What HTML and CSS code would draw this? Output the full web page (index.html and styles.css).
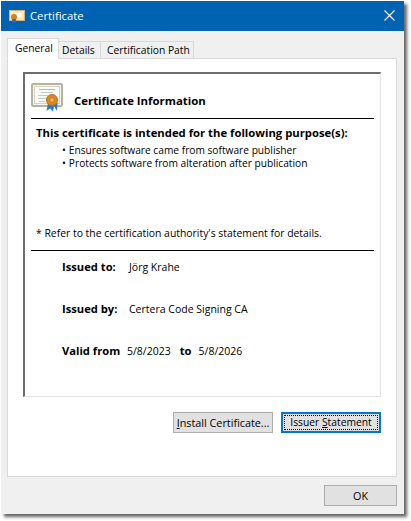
FILE: index.html
```html
<!DOCTYPE html>
<html lang="en">
<head>
    <meta charset="UTF-8">
    <title>Certificate</title>
    <link rel="stylesheet" href="styles.css">
</head>
<body>
    <div class="window">
        <div class="titlebar">
            <svg class="title-icon" width="16" height="16" viewBox="0 0 16 16">
                <rect x="0.5" y="2.5" width="15" height="10" fill="#fbe9c4" stroke="#dcb070"/>
                <rect x="6" y="5" width="7" height="4" fill="#fff"/>
                <circle cx="5" cy="9" r="3" fill="#d8801c"/>
                <path d="M3 11 L3 15 L5 13.5 L7 15 L7 11 Z" fill="#2a6fc0"/>
            </svg>
            <span class="title-text">Certificate</span>
            <svg class="close-icon" width="11" height="11" viewBox="0 0 11 11">
                <path d="M0.5 0.5 L10.5 10.5 M10.5 0.5 L0.5 10.5" stroke="#fff" stroke-width="1.1" fill="none"/>
            </svg>
        </div>
        <div class="dialog-body">
            <div class="tabs">
                <div class="tab active">General</div>
                <div class="tab details-tab">Details</div>
                <div class="tab path-tab">Certification Path</div>
            </div>
            <div class="tab-page">
                <div class="info-box">
                    <div class="info-head">
                        <svg class="cert-icon" width="32" height="29" viewBox="0 0 32 29">
                            <rect x="1" y="1" width="30" height="22" rx="1" fill="#f6f6f2" stroke="#b5b3a0" stroke-width="2"/>
                            <rect x="3.500" y="3.500" width="25" height="17" fill="#fbfbf8" stroke="#d4d3c2"/>
                            <path d="M8 6.500 H24" stroke="#9cc4a8"/>
                            <path d="M10 9.500 H22 M7 12.500 H17 M7 15.500 H15 M8 18.500 H14" stroke="#c4c8c8"/>
                            <path d="M17 20 L15.500 28 L19 25.500 L22 28.500 L23 23 L26 28 L26.500 20 Z" fill="#2f78c8"/>
                            <circle cx="21" cy="17" r="5.500" fill="#dd8a22" stroke="#b96a14"/>
                            <circle cx="21" cy="17" r="2.500" fill="#efae58" stroke="#c47a1c"/>
                        </svg>
                        <span class="info-title">Certificate Information</span>
                    </div>
                    <div class="purpose">
                        <div class="purpose-title">This certificate is intended for the following purpose(s):</div>
                        <ul class="purpose-list">
                            <li>Ensures software came from software publisher</li>
                            <li>Protects software from alteration after publication</li>
                        </ul>
                        <div class="note">* Refer to the certification authority's statement for details.</div>
                    </div>
                    <div class="details">
                        <div class="detail-row"><b>Issued to:</b><span>Jörg Krahe</span></div>
                        <div class="detail-row"><b>Issued by:</b><span>Certera Code Signing CA</span></div>
                        <div class="detail-row valid"><b>Valid from</b><span>5/8/2023</span><b>to</b><span>5/8/2026</span></div>
                    </div>
                </div>
                <div class="page-buttons">
                    <button class="btn install" type="button"><u>I</u>nstall Certificate...</button>
                    <button class="btn issuer" type="button"><span class="focus-ring">Issuer <u>S</u>tatement</span></button>
                </div>
            </div>
            <div class="dialog-buttons">
                <button class="btn ok" type="button">OK</button>
            </div>
        </div>
    </div>
</body>
</html>
```

FILE: styles.css
```css
* {
    box-sizing: border-box;
}

html, body {
    margin: 0;
    padding: 0;
    background-color: white;
}

body {
    padding: 1px 0 0 1px;
    width: 411px;
    height: 521px;
    overflow: hidden;
    font-family: "Open Sans", "Noto Sans", sans-serif;
    font-size: 10.5px;
    color: #000;
}

b {
    font-size: 11.2px;
}

.window {
    width: 403px;
    height: 513px;
    background-color: #f0f0f0;
    box-shadow: 3px 3px 3px rgba(0, 0, 0, 0.6);
    display: flex;
    flex-direction: column;
}

.titlebar {
    height: 30px;
    background-color: #0063b1;
    color: white;
    display: flex;
    align-items: center;
    padding: 0 9px 0 8px;
    flex-shrink: 0;
}

.title-icon {
    margin-right: 5px;
}

.title-text {
    font-size: 11.3px;
    flex: 1;
    margin-top: -2px;
}

.close-icon {
    margin-top: -1px;
}

.dialog-body {
    padding: 7px 7px 0 6px;
    flex: 1;
    display: flex;
    flex-direction: column;
}

.tabs {
    display: flex;
    align-items: flex-end;
    height: 21px;
    margin-bottom: -1px;
    position: relative;
    z-index: 1;
    font-size: 10.3px;
}

.tab {
    height: 18px;
    line-height: 17px;
    background-color: #f0f0f0;
    border: 1px solid #d9d9d9;
    border-left: none;
    white-space: nowrap;
}

.tab.active {
    height: 21px;
    width: 52px;
    padding: 1px 0 0 7px;
    background-color: white;
    border-left: 1px solid #d9d9d9;
    border-bottom-color: white;
}

.details-tab {
    width: 42px;
    padding-left: 3px;
}

.path-tab {
    width: 93px;
    padding-left: 6px;
}

.tab-page {
    width: 390px;
    height: 419px;
    background-color: white;
    border: 1px solid #d9d9d9;
    padding: 13px 15px 0 15px;
}

.info-box {
    width: 358px;
    height: 325px;
    border: 1px solid #e3e3e3;
    border-top: 2px solid #6d6d6d;
    border-left: 2px solid #6d6d6d;
    padding: 8px 6px 0 6px;
}

.info-head {
    display: flex;
    align-items: center;
    height: 37px;
    border-bottom: 1px solid #000;
    padding-bottom: 5px;
}

.cert-icon {
    margin-right: 11px;
}

.info-title {
    font-weight: bold;
    font-size: 11.4px;
    padding-top: 6px;
}

.purpose {
    height: 132px;
    border-bottom: 1px solid #000;
    padding: 6px 0 0 5px;
    display: flex;
    flex-direction: column;
}

.purpose-title {
    font-weight: bold;
    font-size: 11.3px;
    line-height: 16px;
}

.purpose-list {
    list-style: none;
    margin: 3px 0 0 0;
    padding: 0 0 0 26px;
    line-height: 13px;
    font-size: 10.2px;
}

.purpose-list li::before {
    content: "•";
    margin-right: 3px;
}

.note {
    margin-top: auto;
    padding-bottom: 9px;
    line-height: 15px;
    font-size: 10.4px;
}

.details {
    padding: 8px 0 0 31px;
}

.detail-row {
    display: flex;
    align-items: baseline;
    height: 42px;
    line-height: 15px;
}

.detail-row b {
    width: 67px;
}

.detail-row.valid b {
    width: 65px;
}

.detail-row.valid b + span + b {
    width: auto;
    margin: 0 7px 0 9px;
}

.page-buttons {
    display: flex;
    justify-content: flex-end;
    gap: 8px;
    padding-top: 15px;
}

.btn {
    font-family: inherit;
    font-size: 10.8px;
    background-color: #e1e1e1;
    border: 1px solid #adadad;
    color: #000;
    padding: 0;
    height: 21px;
    line-height: 17px;
    white-space: nowrap;
}

.btn.install {
    width: 100px;
}

.btn.issuer {
    width: 100px;
    font-size: 10.3px;
    border: 2px solid #0078d7;
    padding: 1px;
}

.focus-ring {
    display: block;
    height: 15px;
    line-height: 13px;
    border: 1px dotted #000;
}

.dialog-buttons {
    display: flex;
    justify-content: flex-end;
    padding-top: 8px;
}

.btn.ok {
    width: 73px;
}
```
